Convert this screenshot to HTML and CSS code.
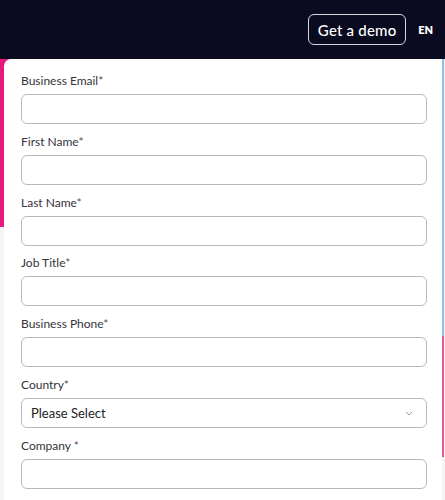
FILE: index.html
```html
<!DOCTYPE html>
<html lang="en">
<head>
<meta charset="utf-8">
<title>Get a demo</title>
<link rel="stylesheet" href="styles.css">
</head>
<body>
<header class="topbar">
  <a class="demo-btn" href="#">Get a demo</a>
  <span class="lang">EN</span>
</header>
<main class="stage">
  <form class="card">
    <div class="field">
      <label class="label">Business Email<span class="req">*</span></label>
      <input class="input" type="email">
    </div>
    <div class="field">
      <label class="label">First Name<span class="req">*</span></label>
      <input class="input" type="text">
    </div>
    <div class="field">
      <label class="label">Last Name<span class="req">*</span></label>
      <input class="input" type="text">
    </div>
    <div class="field">
      <label class="label">Job Title<span class="req">*</span></label>
      <input class="input" type="text">
    </div>
    <div class="field">
      <label class="label">Business Phone<span class="req">*</span></label>
      <input class="input" type="tel">
    </div>
    <div class="field">
      <label class="label">Country<span class="req">*</span></label>
      <div class="input select">
        <span class="select-text">Please Select</span>
        <svg class="chev" width="8" height="5" viewBox="0 0 8 5"><path d="M1 1l3 3 3-3" fill="none" stroke="#9a9a9a" stroke-width="1"/></svg>
      </div>
    </div>
    <div class="field">
      <label class="label">Company <span class="req">*</span></label>
      <input class="input" type="text">
    </div>
  </form>
</main>
</body>
</html>
```
FILE: styles.css
```css
html, body {
  margin: 0;
  padding: 0;
  height: 100%;
}
body {
  font-family: "Lato", "Open Sans", sans-serif;
  background: #f4f4f5;
  overflow: hidden;
}
.topbar {
  height: 59px;
  background: #0a0b21;
  display: flex;
  align-items: center;
  justify-content: flex-end;
  padding-right: 12px;
  box-sizing: border-box;
}
.demo-btn {
  display: flex;
  align-items: center;
  justify-content: center;
  width: 98px;
  height: 31px;
  box-sizing: border-box;
  border: 1px solid #d6d7de;
  border-radius: 6px;
  color: #fff;
  text-decoration: none;
  font-size: 15px;
  font-weight: 500;
  letter-spacing: 0.2px;
}
.lang {
  margin-left: 12px;
  color: #fff;
  font-size: 11px;
  font-weight: 800;
}
.stage {
  display: flex;
  padding: 0 3px 0 4px;
  min-height: 441px;
  background:
    linear-gradient(#e5197e, #e5197e) left top / 10px 168px no-repeat,
    linear-gradient(#8fc1ec, #8fc1ec) right 1px top 0 / 2px 277px no-repeat,
    linear-gradient(#e0599c, #e0599c) right 1px top 277px / 2px 121px no-repeat,
    #f4f4f5;
}
.card {
  flex: 1;
  background: #fff;
  border-top-left-radius: 7px;
  padding: 15px 15px 0 17px;
  display: flex;
  flex-direction: column;
}
.field {
  display: flex;
  flex-direction: column;
  margin-bottom: 10.83px;
}
.label {
  font-size: 12px;
  color: #33333b;
  line-height: 14px;
  margin-bottom: 6px;
}
.req {
  color: #555;
}
.input {
  height: 30px;
  box-sizing: border-box;
  border: 1px solid #b9b9bd;
  border-radius: 6px;
  background: #fff;
  margin: 0;
  font-family: inherit;
}
.select {
  display: flex;
  align-items: center;
  justify-content: space-between;
  padding: 0 13px 0 9px;
}
.select-text {
  font-size: 13px;
  color: #222;
}
.chev {
  display: block;
}
```
